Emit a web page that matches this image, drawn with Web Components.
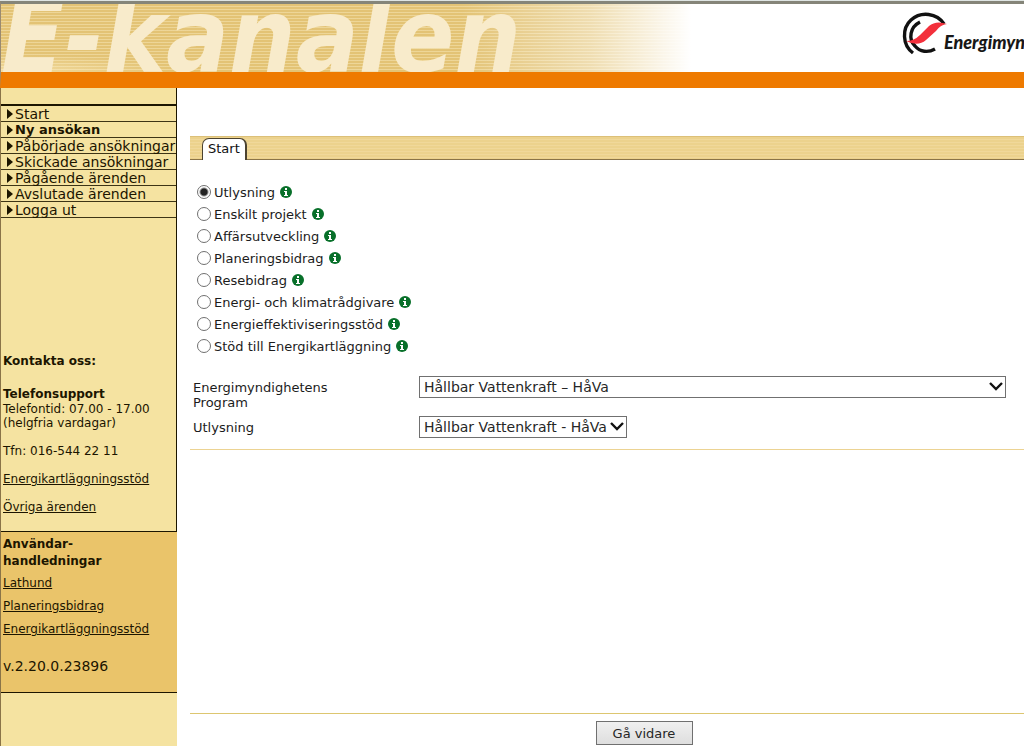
<!DOCTYPE html>
<html lang="sv">
<head>
<meta charset="utf-8">
<title>E-kanalen</title>
<style>
html, body { margin: 0; height: 100%; }
body { background: #fff; color: #1c1c1c; font-family: "DejaVu Sans", Verdana, sans-serif; font-size: 13px; overflow-x: hidden; }
</style>
</head>
<body>
<ek-page>
  <ek-banner slot="banner"></ek-banner>
  <ek-sidebar slot="side"></ek-sidebar>
  <ek-tabs slot="main">Start</ek-tabs>
  <ek-application-form slot="main"></ek-application-form>
  <ek-footer slot="main"></ek-footer>
</ek-page>
<script>
function define(name, html) {
  const template = document.createElement('template');
  template.innerHTML = html;
  customElements.define(name, class extends HTMLElement {
    constructor() {
      super();
      this.attachShadow({ mode: 'open' }).append(template.content.cloneNode(true));
    }
    connectedCallback() {
      for (const el of this.shadowRoot.querySelectorAll('[data-value]')) {
        el.textContent = this.getAttribute(el.dataset.value) || '';
      }
    }
  });
}

define('ek-page', `
<style>
:host { display: flex; flex-direction: column; min-height: 100vh; box-sizing: border-box; padding-bottom: 1px; }
.body { flex: 1; display: grid; grid-template-columns: 177px minmax(0, 1fr); }
main { display: flex; flex-direction: column; padding: 48px 0 0 13px; }
</style>
<slot name="banner"></slot>
<div class="body"><slot name="side"></slot><main><slot name="main"></slot></main></div>`);

define('ek-banner', `
<style>
:host { display: block; border-top: 1px solid #dfe5e3; }
header { border-top: 3px solid #858579; border-bottom: 16px solid #ee7a00; border-left: 1px solid #9a8a70; height: 68px; display: flex; justify-content: space-between; overflow: hidden; background: #fff; }
.art { flex: 0 0 690px;
  background: linear-gradient(90deg, #fff0 460px, #ffffff70 590px, #fff 690px),
    repeating-linear-gradient(#fff0 0 2px, #fff5d060 2px 3px),
    radial-gradient(ellipse at 0 100%, #f3dda3, #fff0 180px), #e3c375; }
h1 { margin: 0; font: italic bold 104px/64px "DejaVu Sans Condensed", "DejaVu Sans", sans-serif; color: #f8ebcb; white-space: nowrap; }
.logo { flex: none; display: flex; width: 122px; padding-top: 7px; box-sizing: border-box; }
.logo svg { flex: none; width: 42px; height: 46px; overflow: visible; }
.logo span { font: italic 900 18px/24px Lato, sans-serif; color: #171717; padding-top: 19px; }
</style>
<header>
  <div class="art"><h1>E-kanalen</h1></div>
  <div class="logo">
    <svg viewBox="901 11 42 46" fill="none" aria-hidden="true">
      <path d="M912 53C901 45 901 28 910 20C920 11 936 13 943 24" stroke="#111" stroke-width="3.4"/>
      <path d="M919 22C909 27 907 39 914 46C919 52 927 53 934 49" stroke="#111" stroke-width="3.4"/>
      <path d="M905 41Q913 41 919 35L928 26Q935 20 946 24Q939 25 935 31L925 40Q917 47 905 41Z" fill="#f3303c"/>
    </svg><span>Energimyn</span>
  </div>
</header>`);

define('ek-sidebar', `
<style>
:host { display: flex; flex-direction: column; background: #f5e3a1; border-left: 1px solid #8a7448; color: #1c1500; }
.top { border-right: 1px solid #1c1500; min-height: 443px; box-sizing: border-box; padding-top: 16px; }
nav ul { margin: 0; padding: 0; list-style: none; border-top: 2px solid #1c1500; }
nav li { height: 16px; box-sizing: border-box; border-bottom: 1px solid #3d3415; }
nav a { display: flex; align-items: center; gap: 2px; padding-left: 6px; line-height: 16px; color: inherit; text-decoration: none; white-space: nowrap; font-size: 14px; }
nav svg { flex: none; width: 6px; height: 10px; }
nav .current { font-weight: bold; font-size: 13px; }
.contact { margin-top: 136px; padding-left: 2px; font-size: 12px; line-height: 14px; }
p, h2, h3 { margin: 0 0 14px; font-size: inherit; }
h2 { margin-bottom: 18px; }
h3 { margin: 0; line-height: 16px; }
.contact a, .guides a { color: inherit; }
.guides { background: #eac46a; border-top: 1px solid #1c1500; border-bottom: 1px solid #1c1500; padding: 4px 2px 17px; font-size: 12px; line-height: 17px; }
.guides h2 { margin: 0 0 5px; }
.guides ul { margin: 0; padding: 0; list-style: none; display: grid; gap: 6px; }
.guides p { margin: 20px 0 0; font-size: 14px; }
</style>
<div class="top">
  <nav><ul>
    <li><a href="#">Start</a></li><li><a href="#" class="current">Ny ansökan</a></li>
    <li><a href="#">Påbörjade ansökningar</a></li><li><a href="#">Skickade ansökningar</a></li>
    <li><a href="#">Pågående ärenden</a></li><li><a href="#">Avslutade ärenden</a></li><li><a href="#">Logga ut</a></li>
  </ul></nav>
  <section class="contact">
    <h2>Kontakta oss:</h2>
    <h3>Telefonsupport</h3>
    <p>Telefontid: 07.00 - 17.00<br>(helgfria vardagar)</p>
    <p>Tfn: 016-544 22 11</p>
    <p><a href="#">Energikartläggningsstöd</a></p>
    <p><a href="#">Övriga ärenden</a></p>
  </section>
</div>
<section class="guides">
  <h2>Användar-<br>handledningar</h2>
  <ul><li><a href="#">Lathund</a></li><li><a href="#">Planeringsbidrag</a></li><li><a href="#">Energikartläggningsstöd</a></li></ul>
  <p>v.2.20.0.23896</p>
</section>`);

define('ek-tabs', `
<style>
:host { display: block; }
div { height: 24px; box-sizing: border-box; padding: 1px 12px 0; border-bottom: 1px solid #8a7448; border-top: 1px solid #dcc078; background: repeating-linear-gradient(#ecd28d 0 2px, #f0d89a 2px 3px); }
a { display: block; width: max-content; box-sizing: border-box; height: 22px; padding: 0 5px; border: 1px solid #4c4330; border-width: 1px 2px 0 1px; border-radius: 7px 7px 0 0; background: #fff; color: #111; line-height: 20px; text-decoration: none; }
</style>
<div><a href="#"><slot></slot></a></div>`);

define('ek-info', `
<style>
:host { display: block; width: 12px; height: 12px; }
svg { display: block; }
</style>
<svg width="12" height="12" viewBox="0 0 12 12" role="img" aria-label="Information"><circle cx="6" cy="6" r="6" fill="#08702a"/><path d="M5 2h2v2H5zM4 5h3v4h1v1H4V9h1V6H4z" fill="#fff"/></svg>`);

define('ek-field', `
<style>
:host { display: grid; grid-template-columns: 226px minmax(0, 1fr); align-items: start; }
label { width: 160px; line-height: 15px; padding-top: 4px; }
.box { display: grid; align-items: center; justify-self: start; }
:host([wide]) .box { justify-self: stretch; }
select, svg { grid-area: 1 / 1; }
select { appearance: none; width: 100%; height: 22px; box-sizing: border-box; margin: 0; padding: 0 19px 0 4px; border: 1px solid #707070; border-radius: 0; background: #fff; color: #262626; font: inherit; font-size: 14px; }
svg { justify-self: end; margin-right: 3px; pointer-events: none; }
</style>
<label for="choice" data-value="label"></label>
<div class="box">
  <select id="choice"><option data-value="value"></option></select>
  <svg width="14" height="10" viewBox="0 0 14 10" fill="none" aria-hidden="true"><path d="M1 1l6 6 6-6" stroke="#111" stroke-width="2.4"/></svg>
</div>`);

const kinds = ['Utlysning', 'Enskilt projekt', 'Affärsutveckling', 'Planeringsbidrag', 'Resebidrag',
  'Energi- och klimatrådgivare', 'Energieffektiviseringsstöd', 'Stöd till Energikartläggning'];

define('ek-application-form', `
<style>
:host { display: block; padding: 21px 0 11px; border-bottom: 1px solid #ecd392; }
fieldset { margin: 0; padding: 0 0 0 7px; border: 0; }
.kind { display: flex; align-items: center; height: 22px; }
.kind label { padding: 2px 5px 0 3px; line-height: 18px; }
input { appearance: none; box-sizing: border-box; width: 14px; height: 14px; margin: 0; border: 1px solid #707070; border-radius: 50%; background: #fff; }
input:checked { background: radial-gradient(circle, #222 0 3px, #fff 5px); }
.fields { display: grid; row-gap: 6px; padding: 19px 18px 0 3px; }
</style>
<fieldset>${kinds.map((k, i) => `<div class="kind"><input type="radio" name="kind" id="k${i}"${i ? '' : ' checked'}><label for="k${i}">${k}</label><ek-info></ek-info></div>`).join('')}</fieldset>
<div class="fields">
  <ek-field wide label="Energimyndighetens Program" value="Hållbar Vattenkraft – HåVa"></ek-field>
  <ek-field label="Utlysning" value="Hållbar Vattenkraft - HåVa"></ek-field>
</div>`);

define('ek-footer', `
<style>
:host { display: flex; justify-content: center; margin-top: auto; padding: 7px 0 1px; border-top: 1px solid #ddc670; }
button { width: 97px; height: 24px; margin: 0 0 0 74px; padding: 0; border: 1px solid #707070; border-radius: 0; background: linear-gradient(#f0f0f0, #dedede); color: #262626; font: inherit; }
</style>
<button type="button">Gå vidare</button>`);

for (const link of document.querySelector('ek-sidebar').shadowRoot.querySelectorAll('nav a')) {
  link.insertAdjacentHTML('afterbegin', '<svg viewBox="0 0 6 10" aria-hidden="true"><path d="M0 0l6 5-6 5z" fill="#1c1500"/></svg>');
}
</script>
</body>
</html>
